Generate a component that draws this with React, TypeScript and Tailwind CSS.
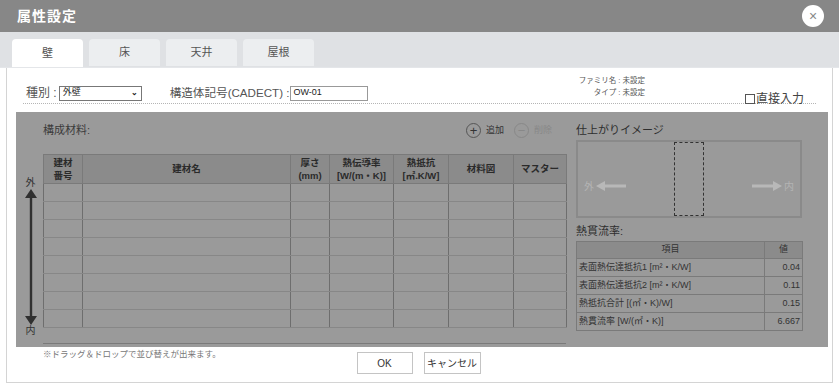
import React from "react";

const tabs = ["壁", "床", "天井", "屋根"];

const heatRows: [string, string][] = [
  ["表面熱伝達抵抗1 [m²・K/W]", "0.04"],
  ["表面熱伝達抵抗2 [m²・K/W]", "0.11"],
  ["熱抵抗合計 [(㎡・K)/W]", "0.15"],
  ["熱貫流率 [W/(㎡・K)]", "6.667"],
];

function ArrowShaft() {
  return (
    <svg width="14" height="136" viewBox="0 0 14 136">
      <polygon points="7,0 1,9 13,9" fill="#303030" />
      <rect x="5.8" y="8" width="2.4" height="120" fill="#303030" />
      <polygon points="7,136 1,127 13,127" fill="#303030" />
    </svg>
  );
}

export default function App() {
  return (
    <div
      className="w-[839px] h-[390px] bg-white overflow-hidden text-[#333]"
      style={{ fontFamily: "'Liberation Sans', 'Noto Sans CJK JP', sans-serif" }}
    >
      {/* title bar */}
      <div className="h-[32px] bg-[#878787] flex items-center justify-between pl-[17px] pr-[15px]">
        <span className="text-white font-bold text-[14px] tracking-[1px]">属性設定</span>
        <button className="w-[22px] h-[22px] rounded-full bg-white flex items-center justify-center text-[#888] text-[14px] leading-none">
          ×
        </button>
      </div>

      {/* tabs */}
      <div className="h-[36px] bg-[#dfe1e4] flex items-end pl-[12px] gap-[6px] border-b border-[#e4e6e9]">
        {tabs.map((t, i) => (
          <div
            key={t}
            className={
              i === 0
                ? "w-[71px] h-[28px] bg-white rounded-t-[4px] flex items-center justify-center text-[11px] text-[#555]"
                : "w-[71px] h-[27px] mb-[1px] bg-[#eceef0] rounded-t-[4px] flex items-center justify-center text-[11px] text-[#555]"
            }
          >
            {t}
          </div>
        ))}
      </div>

      {/* content */}
      <div className="mx-[6px] h-[315px] border-l border-r border-b border-[#d4d4d4]">
        {/* header row */}
        <div className="mx-[16px] h-[36px] border-b border-dotted border-[#b5b5b5] flex items-start">
          <div className="flex items-center mt-[16px] pl-[3px]">
            <span className="text-[12px] text-[#555]">種別 : </span>
            <div className="ml-[2px] w-[83px] h-[15px] border border-[#777] flex items-center justify-between px-[3px] text-[9px] text-[#222]">
              <span>外壁</span>
              <span className="text-[8px] font-bold">⌄</span>
            </div>
            <span className="ml-[28px] text-[11.6px] text-[#555]">構造体記号(CADECT) : </span>
            <div className="ml-[1px] w-[78px] h-[15px] border border-[#999] flex items-center px-[2px] text-[9px] text-[#222]">
              OW-01
            </div>
          </div>
          <div className="ml-auto mt-[7px] mr-[100px] flex flex-col items-end text-[7.5px] leading-[12px] text-[#555]">
            <span>ファミリ名 : 未設定</span>
            <span>タイプ : 未設定</span>
          </div>
          <div className="mt-[22px] mr-[12px] flex items-center text-[12px] text-[#444]">
            <span className="w-[10px] h-[10px] border border-[#555] mr-[1px]" />
            直接入力
          </div>
        </div>

        {/* grey panel */}
        <div className="ml-[9px] mt-[8px] w-[812px] h-[235px] bg-[#9a9a9a] flex">
          {/* arrow column */}
          <div className="w-[27px] flex flex-col items-center pt-[65px] pl-[2px]">
            <span className="text-[10px] leading-[12px] text-[#333]">外</span>
            <ArrowShaft />
            <span className="text-[10px] leading-[12px] text-[#333]">内</span>
          </div>

          {/* materials */}
          <div className="w-[523px]">
            <div className="h-[42px] flex items-center pb-[5px]">
              <span className="text-[11px] text-[#3a3a3a]">構成材料:</span>
              <div className="ml-auto mr-[14px] flex items-center gap-[10px] text-[9px]">
                <span className="flex items-center gap-[5px] text-[#333]">
                  <span className="w-[15px] h-[15px] rounded-full border border-[#555] flex items-center justify-center text-[13px] leading-none">+</span>
                  追加
                </span>
                <span className="flex items-center gap-[5px] text-[#888]">
                  <span className="w-[15px] h-[15px] rounded-full border border-[#888] flex items-center justify-center text-[13px] leading-none">−</span>
                  削除
                </span>
              </div>
            </div>
            <div className="h-[190px] border-b border-[#7a7a7a]">
              <table className="border-collapse table-fixed w-[523px] text-[9.5px]">
                <colgroup>
                  <col className="w-[39px]" />
                  <col className="w-[208px]" />
                  <col className="w-[39px]" />
                  <col className="w-[64px]" />
                  <col className="w-[55px]" />
                  <col className="w-[65px]" />
                  <col className="w-[53px]" />
                </colgroup>
                <thead>
                  <tr className="h-[29px] bg-[#8b8b8b] text-[#2a2a2a]">
                    <th className="border border-[#7a7a7a] font-semibold leading-[13px]">建材<br />番号</th>
                    <th className="border border-[#7a7a7a] font-semibold">建材名</th>
                    <th className="border border-[#7a7a7a] font-semibold leading-[13px]">厚さ<br />(mm)</th>
                    <th className="border border-[#7a7a7a] font-semibold leading-[13px]">熱伝導率<br />[W/(m・K)]</th>
                    <th className="border border-[#7a7a7a] font-semibold leading-[13px]">熱抵抗<br />[㎡.K/W]</th>
                    <th className="border border-[#7a7a7a] font-semibold">材料図</th>
                    <th className="border border-[#7a7a7a] font-semibold">マスター</th>
                  </tr>
                </thead>
                <tbody>
                  {Array.from({ length: 8 }).map((_, r) => (
                    <tr key={r} className="h-[18px]">
                      {Array.from({ length: 7 }).map((__, c) => (
                        <td key={c} className="border-t border-b border-[#878787] border-l border-l-[#6e6e6e] border-r border-r-[#6e6e6e]" />
                      ))}
                    </tr>
                  ))}
                </tbody>
              </table>
            </div>
          </div>

          {/* right side */}
          <div className="ml-[10px] w-[226px] pt-[11px]">
            <div className="text-[11px] leading-[14px] text-[#2e2e2e]">仕上がりイメージ</div>
            <div className="mt-[3px] h-[78px] border-[2px] border-[#8a8a8a] flex items-center justify-between px-[6px] relative">
              <div className="flex items-center gap-[2px] mt-[14px] text-[10px] text-[#b4b4b4]">
                <span>外</span>
                <svg width="30" height="10" viewBox="0 0 30 10">
                  <polygon points="0,5 9,0 9,10" fill="#b8b8b8" />
                  <rect x="8" y="3.5" width="22" height="3" fill="#b8b8b8" />
                </svg>
              </div>
              <div className="absolute left-[96px] top-0 w-[30px] h-[74px] border border-dashed border-[#333]" />
              <div className="flex items-center gap-[2px] mt-[14px] text-[10px] text-[#b4b4b4]">
                <svg width="30" height="10" viewBox="0 0 30 10">
                  <rect x="0" y="3.5" width="22" height="3" fill="#b8b8b8" />
                  <polygon points="30,5 21,0 21,10" fill="#b8b8b8" />
                </svg>
                <span>内</span>
              </div>
            </div>
            <div className="mt-[6px] text-[11px] leading-[14px] text-[#2e2e2e]">熱貫流率:</div>
            <table className="mt-[3px] border-collapse table-fixed w-[226px] text-[9px] text-[#333]">
              <colgroup>
                <col className="w-[188px]" />
                <col className="w-[38px]" />
              </colgroup>
              <thead>
                <tr className="h-[17px] bg-[#8b8b8b]">
                  <th className="border border-[#7a7a7a] font-normal">項目</th>
                  <th className="border border-[#7a7a7a] font-normal">値</th>
                </tr>
              </thead>
              <tbody>
                {heatRows.map(([k, v]) => (
                  <tr key={k} className="h-[18px]">
                    <td className="border border-[#7a7a7a] pl-[2px] whitespace-nowrap">{k}</td>
                    <td className="border border-[#7a7a7a] text-right pr-[2px]">{v}</td>
                  </tr>
                ))}
              </tbody>
            </table>
          </div>
        </div>

        {/* footer */}
        <div className="relative h-[38px]">
          <div className="absolute left-[36px] top-[1px] text-[8.5px] text-[#777]">
            ※ドラッグ＆ドロップで並び替えが出来ます。
          </div>
          <div className="flex justify-center gap-[11px] pt-[5px] pr-[2px]">
            <button className="w-[56px] h-[22px] border border-[#c4c4c4] bg-white text-[10px] text-[#333]">OK</button>
            <button className="w-[57px] h-[22px] border border-[#c4c4c4] bg-white text-[10px] text-[#333]">キャンセル</button>
          </div>
        </div>
      </div>
    </div>
  );
}
